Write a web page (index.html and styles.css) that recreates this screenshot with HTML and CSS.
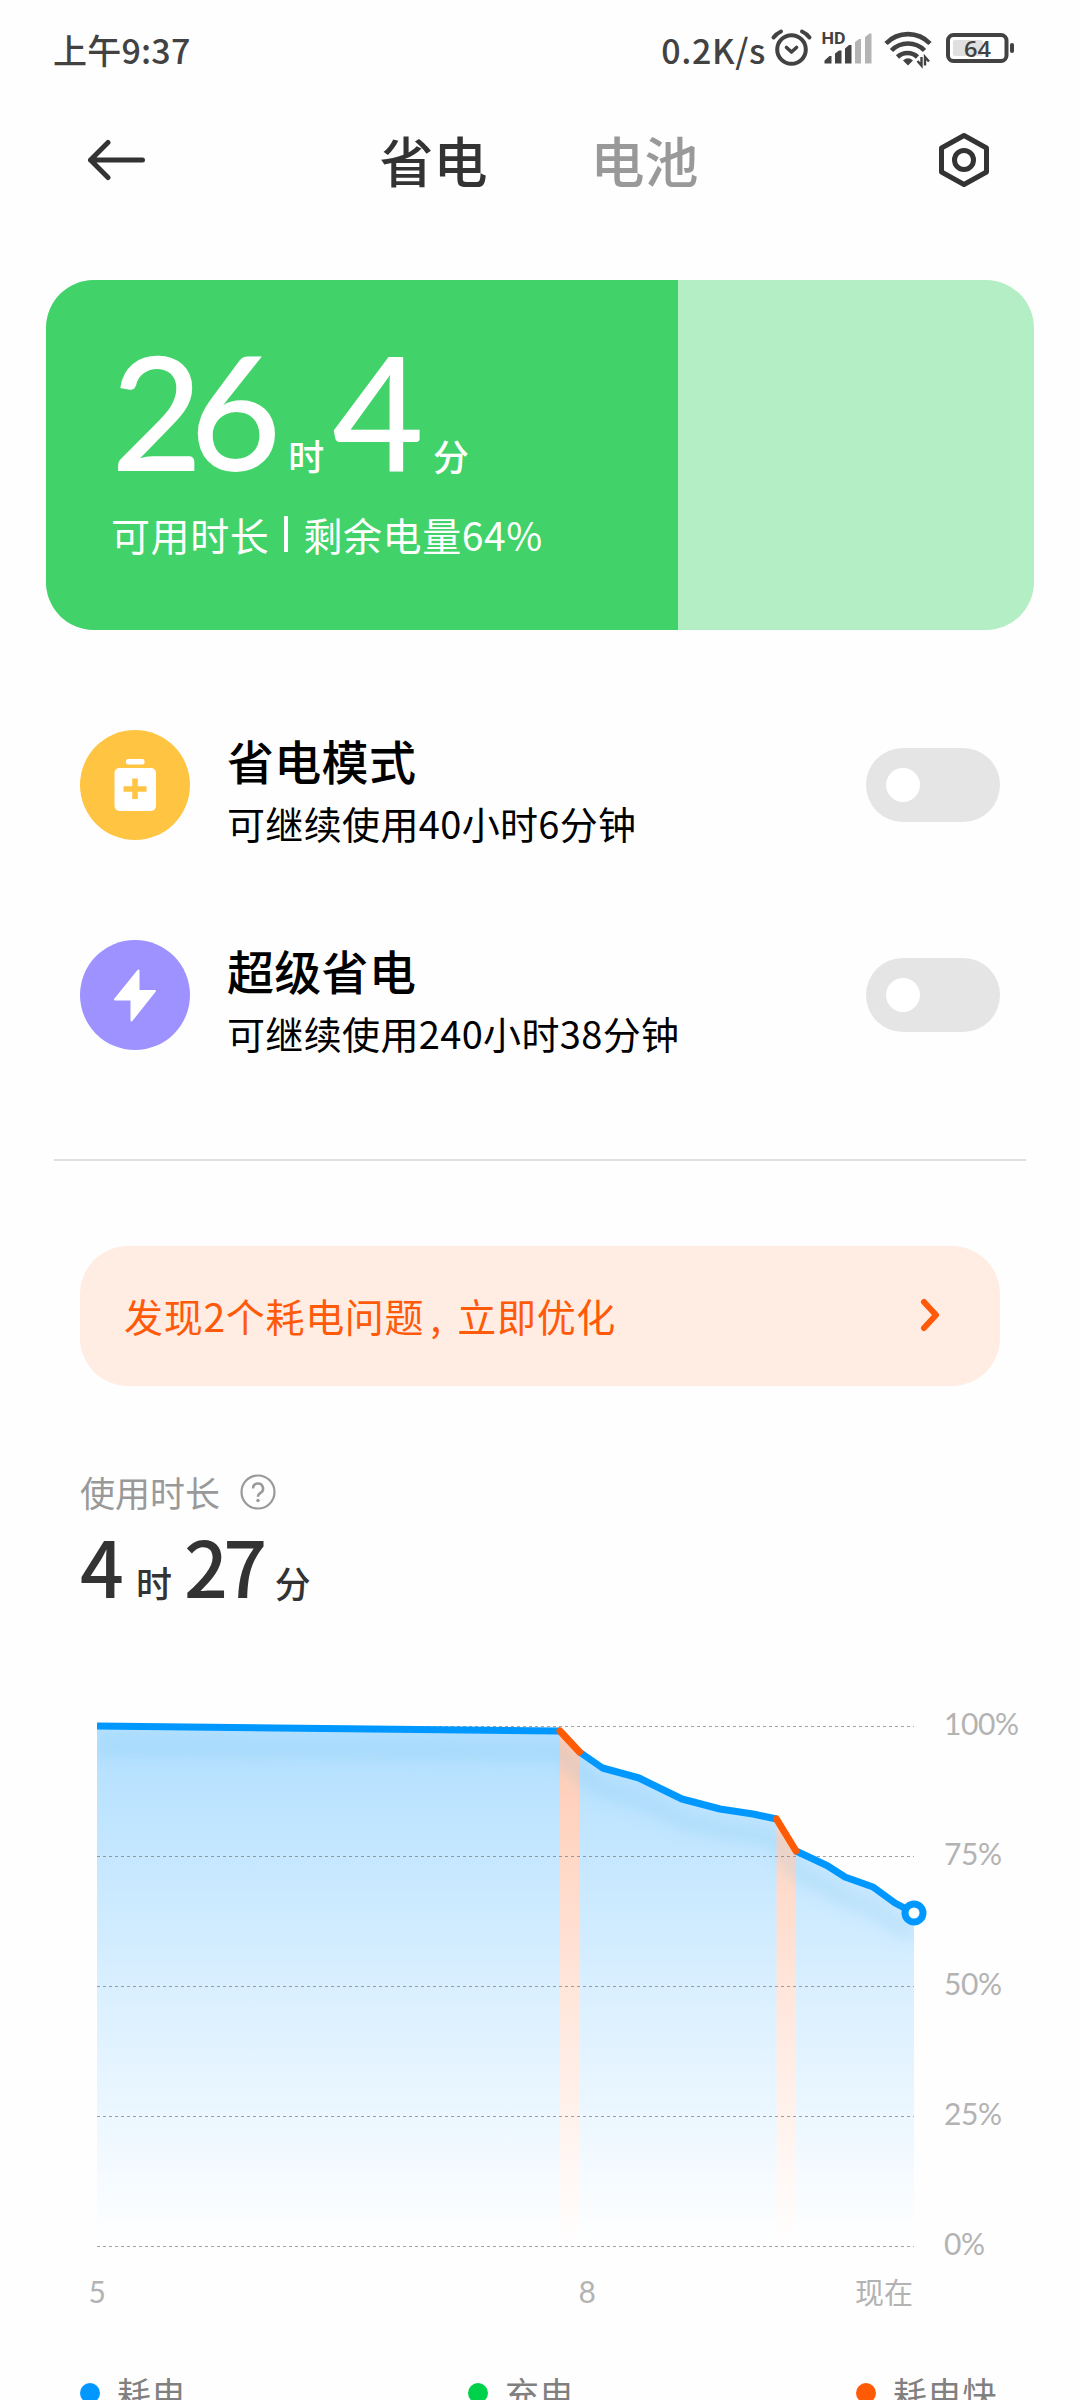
FILE: index.html
```html
<!DOCTYPE html>
<html lang="zh-CN">
<head>
<meta charset="utf-8">
<title>省电与电池</title>
<link rel="stylesheet" href="styles.css">
</head>
<body>
<div class="screen">
  <header class="status">
    <span class="clock">上午9:37</span>
    <span class="speed">0.2K/s</span>
    <svg class="status-icons" width="264" height="48" viewBox="760 26 264 48" fill="none">
      <g stroke="#424242" stroke-linecap="round" stroke-linejoin="round">
        <circle cx="791.5" cy="50.500" r="14.3" stroke-width="4"/>
        <path d="M786.500 48.500l5 4.500 5-4.500" stroke-width="3.600"/>
        <path d="M773.500 38.500q3-4 7.500-6M809.500 38.500q-3-4-7.500-6" stroke-width="4"/>
      </g>
      <text class="hd" x="821.500" y="45" textLength="24" lengthAdjust="spacingAndGlyphs">HD</text>
      <path fill="#424242" d="M824.500 64.500v-3l5-4.500h2v7.500zM835 64.500v-10l4-3h2.500v13zM845 64.500v-15l4-3.500h2.500v18.500z"/>
      <path fill="#b4b4b4" d="M855 64.500v-21.500l4-3h2v24.500zM865 64.500v-26.500l4.500-3.500h2v30z"/>
      <g stroke="#424242" stroke-width="4.600">
        <path d="M886 44.500a30.500 30.500 0 0 1 44 0"/>
        <path d="M891.500 51.500a23 23 0 0 1 33 0"/>
        <path d="M897.500 58a14.500 14.500 0 0 1 20 0"/>
      </g>
      <path fill="#424242" d="M903 61.500q5-4.500 10 0l-5 5z"/>
      <path stroke="#424242" stroke-width="2.400" d="M921.500 58v8.500l-4-4.500M925 66.500v-8.500l4 4.500"/>
      <rect x="953" y="41" width="30" height="16" rx="2" fill="#e0e0e0"/>
      <rect x="948" y="36" width="58.500" height="26" rx="5.500" stroke="#424242" stroke-width="4"/>
      <path stroke="#424242" stroke-width="4" stroke-linecap="round" d="M1012 46v6"/>
      <text class="level" x="964" y="57.500" textLength="27" lengthAdjust="spacingAndGlyphs">64</text>
    </svg>
  </header>

  <nav class="nav">
    <svg width="60" height="42" viewBox="0 0 60 42" fill="none" stroke="#333" stroke-width="5" stroke-linecap="round" stroke-linejoin="round"><path d="M56.500 21H4.500M22 3.500L4.500 21L22 38.500"/></svg>
    <div class="tabs"><span class="tab active">省电</span><span class="tab">电池</span></div>
    <svg width="56" height="60" viewBox="0 0 56 60" fill="none" stroke="#333" stroke-width="5"><path stroke-linejoin="round" d="M28 5.500L50.500 18V42L28 54.500L5.500 42V18z"/><circle cx="28" cy="30" r="9.500"/></svg>
  </nav>

  <section class="battery-card">
    <div class="battery-fill" style="width:63.970%">
      <div class="remain"><b class="n26">26</b><i class="u1">时</i><b class="n4">4</b><i class="u2">分</i></div>
      <div class="remain-note">可用时长<span class="bar"></span>剩余电量64%</div>
    </div>
  </section>

  <section class="modes">
    <div class="mode">
      <svg width="110" height="110" viewBox="0 0 110 110"><circle cx="55" cy="55" r="55" fill="#ffc442"/><rect x="46" y="29" width="18.500" height="5.500" rx="2" fill="#fff"/><rect x="34.500" y="38" width="41.500" height="43" rx="5" fill="#fff"/><path d="M55 48.500v20.500M43.500 59h23" stroke="#ffc442" stroke-width="5.500"/></svg>
      <div class="mode-text"><h2>省电模式</h2><p>可继续使用40小时6分钟</p></div>
      <span class="toggle"></span>
    </div>
    <div class="mode">
      <svg width="110" height="110" viewBox="0 0 110 110"><circle cx="55" cy="55" r="55" fill="#9d92ff"/><path d="M58.500 30.500V51H75L51.500 80.500V59.500H35z" fill="#fff" stroke="#fff" stroke-width="2" stroke-linejoin="round"/></svg>
      <div class="mode-text"><h2>超级省电</h2><p>可继续使用240小时38分钟</p></div>
      <span class="toggle"></span>
    </div>
  </section>

  <hr class="divider">

  <section class="alert">
    <span>发现2个耗电问题<em>,</em>立即优化</span>
    <svg width="24" height="36" viewBox="0 0 24 36" fill="none" stroke="#ff5a0a" stroke-width="6" stroke-linecap="round" stroke-linejoin="round"><path d="M5 5L17 18L5 31"/></svg>
  </section>

  <section class="usage">
    <div class="usage-label"><span>使用时长</span>
      <svg width="36" height="36" viewBox="0 0 36 36" fill="none" stroke="#999"><circle cx="18" cy="18" r="16.500" stroke-width="2.200"/><path d="M13 14.500a5 5 0 1 1 7.500 4.300q-2.500 1.500-2.500 4" stroke-width="2.500"/><circle cx="18" cy="26.500" r="1.700" fill="#999" stroke="none"/></svg>
    </div>
    <div class="usage-value"><b>4</b><i>时</i><b class="minutes">27</b><i>分</i></div>
  </section>

  <svg class="chart" width="1080" height="640" viewBox="0 1690 1080 640">
    <defs>
      <linearGradient id="blue" gradientUnits="userSpaceOnUse" x1="0" y1="1726" x2="0" y2="2246"><stop offset="0" stop-color="#b1dfff"/><stop offset=".5" stop-color="#d9efff"/><stop offset="1" stop-color="#fff"/></linearGradient>
      <linearGradient id="orange" gradientUnits="userSpaceOnUse" x1="0" y1="1726" x2="0" y2="2246"><stop offset="0" stop-color="#ffcab2"/><stop offset=".5" stop-color="#ffe5da"/><stop offset="1" stop-color="#fff"/></linearGradient>
      <clipPath id="area"><path d="M97 1726L560 1731L579.500 1752L602.500 1768L639 1778L682 1799L720 1809L753 1814L776.500 1819L796 1851L827 1865.500L845 1877L873 1887L895 1903L914 1913V2246H97z"/></clipPath>
      <filter id="soft" x="-10%" y="-20%" width="120%" height="150%"><feGaussianBlur stdDeviation="8"/></filter>
    </defs>
    <g clip-path="url(#area)">
      <rect x="97" y="1720" width="817" height="526" fill="url(#blue)"/>
      <path fill="url(#orange)" d="M560 1720h19.500v526H560zM776.500 1720h19.500v526h-19.500z"/>
      <path filter="url(#soft)" transform="translate(0 21)" fill="none" stroke="#60b8e8" stroke-opacity=".2" stroke-width="15" d="M97 1726L560 1731L579.500 1752L602.500 1768L639 1778L682 1799L720 1809L753 1814L776.500 1819L796 1851L827 1865.500L845 1877L873 1887L895 1903L914 1913"/>
    </g>
    <path stroke="#707070" stroke-opacity=".65" stroke-width="1" stroke-dasharray="3 3" d="M97 1726.500H914M97 1856.500H914M97 1986.500H914M97 2116.500H914M97 2246.500H914"/>
    <g fill="none" stroke-width="7" stroke-linejoin="round">
      <path stroke="#0098ff" d="M97 1726L560 1731M579.500 1752L602.500 1768L639 1778L682 1799L720 1809L753 1814L776.500 1819M796 1851L827 1865.500L845 1877L873 1887L895 1903L914 1913"/>
      <path stroke="#ff5a05" stroke-linecap="round" d="M560 1731L579.500 1752M776.500 1819L796 1851"/>
    </g>
    <circle cx="914" cy="1913" r="9" fill="#fff" stroke="#0098ff" stroke-width="7"/>
    <g class="axis">
      <text x="944" y="1735">100%</text><text x="944" y="1865">75%</text><text x="944" y="1995">50%</text><text x="944" y="2125">25%</text><text x="944" y="2255">0%</text>
      <text x="97" y="2303" text-anchor="middle">5</text><text x="587" y="2303" text-anchor="middle">8</text><text class="now" x="855" y="2303.500">现在</text>
    </g>
  </svg>

  <footer class="legend">
    <span><i class="dot blue"></i>耗电</span><span><i class="dot green"></i>充电</span><span><i class="dot orange"></i>耗电快</span>
  </footer>
</div>
</body>
</html>
```
FILE: styles.css
```css
* { box-sizing: border-box; margin: 0; padding: 0; }
html, body { width: 1080px; height: 2400px; overflow: hidden; background: #fefefe; }
body { font-family: "Noto Sans CJK SC", sans-serif; }
b, i, em { font-style: normal; font-weight: inherit; }
svg { display: block; flex: none; }
.screen { width: 1080px; height: 2400px; overflow: hidden; display: flex; flex-direction: column; }
.screen > * { flex: none; }

.status { height: 98px; display: flex; align-items: center; padding: 0 56px 0 53px; color: #424242; font-weight: 500; }
.clock { font-size: 34px; letter-spacing: .2px; }
.speed { font-size: 34px; letter-spacing: .6px; margin-left: auto; }
.status-icons { margin-left: -6px; }
.hd { font: 700 16px Roboto, sans-serif; fill: #424242; }
.level { font: 600 22px "Open Sans", sans-serif; fill: #424242; }

.nav { height: 124px; display: flex; align-items: center; justify-content: space-between; padding: 0 88px 0 86px; }
.tabs { display: flex; gap: 103px; font-size: 54px; font-weight: 500; line-height: 80px; margin-right: 4px; }
.tab { color: #999; }
.tab.active { color: #333; }

.battery-card { margin: 58px 46px 0; height: 350px; border-radius: 48px; overflow: hidden; background: #b3eec4; }
.battery-fill { height: 350px; background: #41d369; color: #fff; padding: 56px 0 0 65px; }
.remain { height: 158px; display: flex; align-items: baseline; line-height: 148px; }
.remain b { font-family: Lato, sans-serif; font-weight: 500; font-size: 158px; letter-spacing: -13px; }
.remain i { font-size: 36px; font-weight: 500; }
.u1 { margin: 0 8px 0 20px; }
.u2 { margin-left: 22px; }
.remain-note { display: flex; align-items: center; height: 80px; font-size: 39px; letter-spacing: .6px; }
.bar { width: 4px; height: 36px; background: #fff; margin: 0 15px; }

.modes { padding: 100px 80px 0; display: flex; flex-direction: column; gap: 100px; }
.mode { height: 110px; display: flex; align-items: center; }
.mode-text { margin-left: 37px; padding-top: 12px; color: #000; }
.mode-text h2 { font-size: 47px; line-height: 64px; font-weight: 500; letter-spacing: .3px; }
.mode-text p { font-size: 38px; line-height: 62px; letter-spacing: .35px; }
.toggle { margin-left: auto; width: 134px; height: 74px; border-radius: 37px; background: #e5e5e5; padding: 20px; }
.toggle::before { content: ""; display: block; width: 34px; height: 34px; border-radius: 50%; background: #fff; }

.divider { border: 0; height: 2px; background: #e0e0e0; margin: 109px 54px 0; }

.alert { margin: 85px 80px 0; height: 140px; border-radius: 48px; background: #ffede4; color: #ff5a0a; padding: 0 57px 2px 44px; display: flex; align-items: center; justify-content: space-between; font-size: 39px; letter-spacing: .7px; }
.alert em { display: inline-block; width: 33px; padding-left: 6px; }

.usage { padding: 78px 80px 0; height: 304px; }
.usage-label { display: flex; align-items: center; gap: 20px; height: 54px; font-size: 35px; color: #999; }
.usage-label svg { margin-top: 2px; }
.usage-value { display: flex; align-items: baseline; color: #333; font-weight: 500; line-height: 100px; margin-top: -3px; }
.usage-value b { font-size: 77px; }
.usage-value .minutes { letter-spacing: -4.500px; }
.usage-value i { font-size: 36px; margin: 0 12px; }

.chart { height: 640px; }
.axis { font: 30px Lato, sans-serif; letter-spacing: -.4px; fill: #b3b3b3; }
.now { font: 29px "Noto Sans CJK SC", sans-serif; letter-spacing: 0; }

.legend { display: grid; grid-template-columns: 388px 388px 1fr; padding: 38px 80px 0; height: 70px; font-size: 34px; letter-spacing: .8px; color: #808080; line-height: 50px; }
.legend span { display: flex; align-items: center; gap: 17px; white-space: nowrap; }
.dot { width: 20px; height: 20px; border-radius: 50%; flex: none; }
.dot.blue { background: #0098ff; }
.dot.green { background: #00d14b; }
.dot.orange { background: #ff5a05; }
```
